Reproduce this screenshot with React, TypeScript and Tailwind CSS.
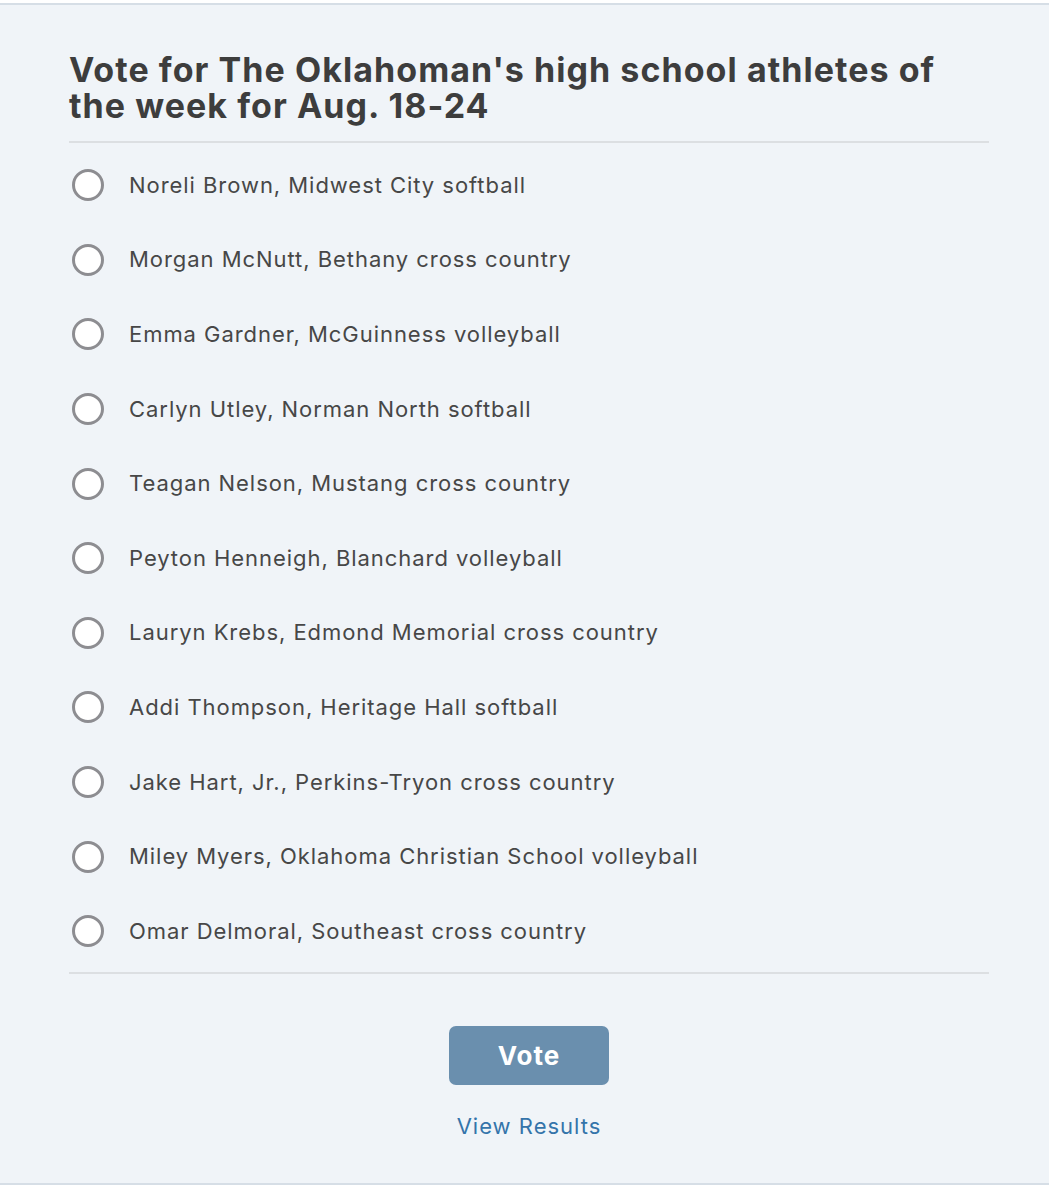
import React, { useState } from 'react';

const athletes = [
  'Noreli Brown, Midwest City softball',
  'Morgan McNutt, Bethany cross country',
  'Emma Gardner, McGuinness volleyball',
  'Carlyn Utley, Norman North softball',
  'Teagan Nelson, Mustang cross country',
  'Peyton Henneigh, Blanchard volleyball',
  'Lauryn Krebs, Edmond Memorial cross country',
  'Addi Thompson, Heritage Hall softball',
  'Jake Hart, Jr., Perkins-Tryon cross country',
  'Miley Myers, Oklahoma Christian School volleyball',
  'Omar Delmoral, Southeast cross country',
];

const App: React.FC = () => {
  const [selected, setSelected] = useState<number | null>(null);

  return (
    <div className="min-h-[1200px] bg-white pt-[3px] font-['Inter','Liberation_Sans',sans-serif]">
      <div className="border-y-2 border-[#d6dee6] bg-[#f0f4f8] pl-[69px] pr-[60px] pt-[47px] pb-[42px]">
        <h1 className="max-w-[890px] text-[34px] leading-[36px] font-bold tracking-[1.05px] text-[#3d3d3d]">
          Vote for The Oklahoman's high school athletes of the week for Aug. 18-24
        </h1>

        {/* Options */}
        <div className="mt-[17px] border-y-2 border-[#dcdfe2] pt-[5px] pb-[3px]">
          {athletes.map((name, i) => (
            <label
              key={name}
              className="flex h-[74.6px] cursor-pointer items-center"
              onClick={() => setSelected(i)}
            >
              <span className="ml-[3px] flex h-[32px] w-[32px] items-center justify-center rounded-full border-[3px] border-[#8d8d91] bg-white">
                {selected === i && <span className="h-[14px] w-[14px] rounded-full bg-[#6a8fae]" />}
              </span>
              <span className="ml-[25px] text-[22px] tracking-[0.95px] text-[#474747]">{name}</span>
            </label>
          ))}
        </div>

        {/* Actions */}
        <div className="flex flex-col items-center">
          <button className="mt-[52px] h-[59px] w-[160px] rounded-[7px] bg-[#6a8fae] text-[26px] font-bold tracking-[1px] text-white">
            Vote
          </button>
          <a href="#" className="mt-[26px] text-[22px] leading-[30px] tracking-[1px] text-[#3474aa]">
            View Results
          </a>
        </div>
      </div>
    </div>
  );
};

export default App;
